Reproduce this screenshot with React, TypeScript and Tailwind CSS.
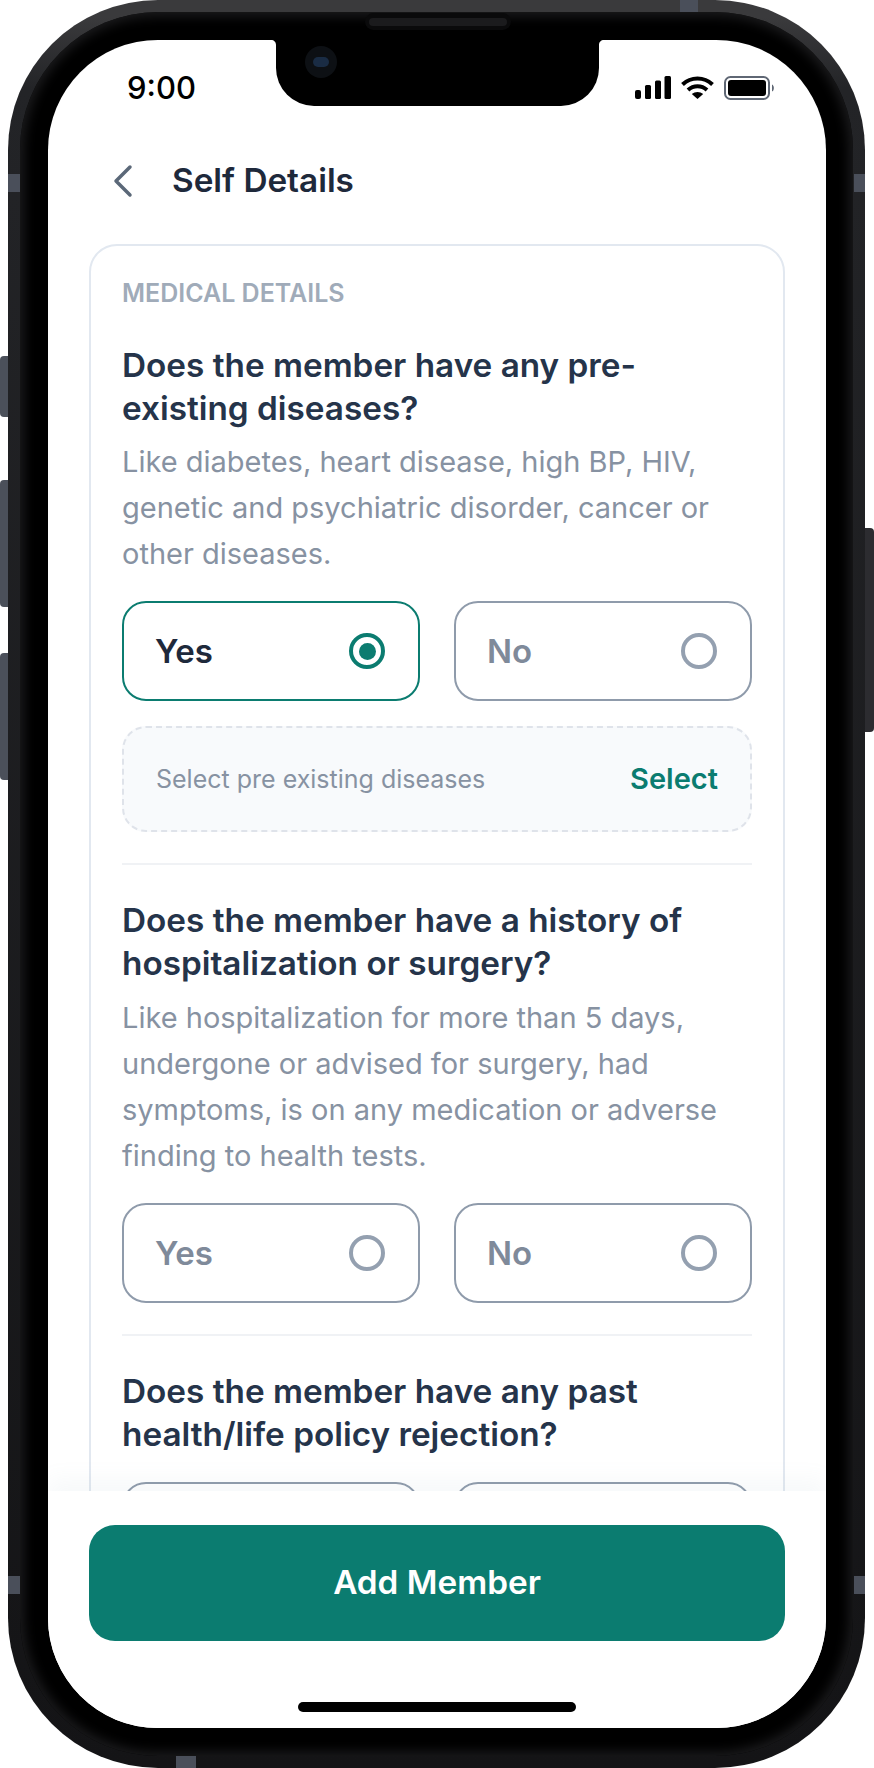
const questions = [
  {
    id: "pre-existing",
    title: ["Does the member have any pre-", "existing diseases?"],
    hint: [
      "Like diabetes, heart disease, high BP, HIV,",
      "genetic and psychiatric disorder, cancer or",
      "other diseases.",
    ],
    answer: "Yes",
  },
  {
    id: "hospitalization",
    title: ["Does the member have a history of", "hospitalization or surgery?"],
    hint: [
      "Like hospitalization for more than 5 days,",
      "undergone or advised for surgery, had",
      "symptoms, is on any medication or adverse",
      "finding to health tests.",
    ],
    answer: null,
  },
  {
    id: "rejection",
    title: ["Does the member have any past", "health/life policy rejection?"],
    hint: [],
    answer: null,
  },
];

const RadioCard = ({ label, active }: { label: string; active: boolean }) => (
  <div
    className={`flex h-[100px] flex-1 items-center justify-between rounded-[24px] border-2 pl-[31px] pr-[33px] ${
      active ? "border-[#0b7c70]" : "border-[#8f9bab]"
    }`}
  >
    <span
      className={`pt-[2px] text-[33px] font-semibold ${
        active ? "text-[#1e293b]" : "text-[#7f8a9a]"
      }`}
    >
      {label}
    </span>
    {active ? (
      <span className="flex size-[36px] items-center justify-center rounded-full border-[4px] border-[#0b7c70]">
        <span className="size-[17px] rounded-full bg-[#0b7c70]" />
      </span>
    ) : (
      <span className="size-[36px] rounded-full border-[4px] border-[#94a0b0]" />
    )}
  </div>
);

const StatusIcons = () => (
  <div className="flex items-center gap-[10px]">
    <svg width="36" height="24" viewBox="0 0 36 24" fill="#000">
      <rect x="0" y="14" width="6" height="9" rx="2" />
      <rect x="10" y="9" width="6" height="14" rx="1.5" />
      <rect x="20" y="4.5" width="6" height="18.5" rx="1.5" />
      <rect x="29.5" y="0" width="6.5" height="23" rx="1.5" />
    </svg>
    <svg width="33" height="24" viewBox="0 0 33 24" fill="none" stroke="#000" strokeWidth="4">
      <path d="M1.5 8.5 C10 0.5 23 0.5 31.5 8.5" />
      <path d="M7 14 C12.5 9 20.5 9 26 14" />
      <path d="M16.5 23 L10.8 18 C14 15.3 19 15.3 22.2 18 Z" fill="#000" stroke="none" />
    </svg>
    <svg width="52" height="24" viewBox="0 0 52 24" fill="none">
      <rect x="1" y="1" width="44" height="22" rx="5.5" stroke="#5f6774" strokeWidth="2" />
      <rect x="4" y="4" width="38" height="16" rx="3" fill="#000" />
      <path d="M48 8.5 C50.5 9.5 50.5 14.5 48 15.5 Z" fill="#5f6774" />
    </svg>
  </div>
);

export default function App() {
  return (
    <div className="relative h-[1768px] w-[874px] bg-white font-['Inter',sans-serif]">
      {/* side buttons */}
      <div className="absolute left-0 top-[356px] h-[61px] w-[9px] rounded-l-[4px] bg-[#4b505a]" />
      <div className="absolute left-0 top-[480px] h-[127px] w-[9px] rounded-l-[4px] bg-[#4b505a]" />
      <div className="absolute left-0 top-[653px] h-[127px] w-[9px] rounded-l-[4px] bg-[#4b505a]" />
      <div className="absolute right-0 top-[528px] h-[204px] w-[10px] rounded-r-[4px] bg-[#2c2c30]" />

      <div className="relative ml-[8px] h-[1768px] w-[857px] rounded-[150px] bg-gradient-to-b from-[#3a3a3c] from-[1%] via-[#232427] via-[5%] to-[#141416] p-[12px]">
        {/* antenna bands */}
        <div className="absolute left-[672px] top-0 h-[12px] w-[18px] bg-[#4a4f5a]" />
        <div className="absolute left-0 top-[174px] h-[18px] w-[12px] bg-[#4a4f5a]" />
        <div className="absolute right-0 top-[174px] h-[18px] w-[11px] bg-[#4a4f5a]" />
        <div className="absolute left-0 top-[1576px] h-[18px] w-[12px] bg-[#4a4f5a]" />
        <div className="absolute right-0 top-[1576px] h-[18px] w-[11px] bg-[#4a4f5a]" />
        <div className="absolute bottom-0 left-[168px] h-[12px] w-[20px] bg-[#4a4f5a]" />

        <div className="h-full w-full rounded-[138px] bg-black pb-[28px] pl-[28px] pr-[27px] pt-[28px] shadow-[inset_0_0_12px_4px_#1c1c1e]">
          {/* speaker */}
          <div className="absolute left-[357px] top-[13px] z-30 flex h-[17px] w-[146px] items-center rounded-full bg-[#0a0a0b] px-[4px]">
            <div className="h-[8px] w-full rounded-full bg-[#1b1b1d]" />
          </div>
          <div className="relative flex h-full w-full flex-col overflow-hidden rounded-[110px] bg-white">
            {/* notch */}
            <div className="absolute left-[228px] top-0 z-20 h-[66px] w-[323px] rounded-b-[38px] bg-black">
              <svg className="absolute -left-[5px] top-0" width="5" height="5" viewBox="0 0 5 5" fill="#000">
                <path d="M0 0 H5 V5 C5 2 3 0 0 0 Z" />
              </svg>
              <svg className="absolute -right-[5px] top-0" width="5" height="5" viewBox="0 0 5 5" fill="#000">
                <path d="M5 0 H0 V5 C0 2 2 0 5 0 Z" />
              </svg>
              <div className="absolute left-[29px] top-[6px] size-[32px] rounded-full bg-[#0d1014]">
                <div className="absolute left-[8px] top-[11px] h-[10px] w-[16px] rounded-full bg-[#1a2c44]" />
              </div>
            </div>

            <div className="flex h-[66px] shrink-0 items-end justify-between pb-0 pl-[79px] pr-[50px]">
              <span className="text-[31px] font-medium leading-[36px] text-black">9:00</span>
              <div className="pb-[6px]">
                <StatusIcons />
              </div>
            </div>

            <div className="mt-[37px] flex h-[76px] shrink-0 items-center gap-[38px] pl-[64px]">
              <svg width="22" height="34" viewBox="0 0 22 34" fill="none" stroke="#5b6878" strokeWidth="3.5" strokeLinecap="round" strokeLinejoin="round">
                <path d="M18 3 L4 17 L18 31" />
              </svg>
              <h1 className="text-[33.3px] font-semibold leading-none text-[#1e293b]">Self Details</h1>
            </div>

            <div className="min-h-0 flex-1 overflow-hidden px-[41px] pt-[25px]">
              <div className="rounded-[28px] border-2 border-[#e2e8f0] px-[31px] pb-[40px] pt-[29px]">
                <p className="text-[25px] font-semibold leading-[36px] text-[#a0abb9]">MEDICAL DETAILS</p>
                {questions.map((question, index) => (
                  <div key={question.id}>
                    <h2 className={`text-[33.3px] font-semibold leading-[43px] text-[#25344a] ${index === 0 ? "mt-[33px]" : "mt-[34px]"}`}>
                      {question.title.map((line) => (
                        <div key={line}>{line}</div>
                      ))}
                    </h2>
                    {question.hint.length > 0 && (
                      <div className={`text-[29px] leading-[46px] text-[#8792a2] ${index === 0 ? "mt-[9px]" : "mt-[10px]"}`}>
                        {question.hint.map((line) => (
                          <div key={line}>{line}</div>
                        ))}
                      </div>
                    )}
                    <div className={`flex gap-[34px] ${question.hint.length > 0 ? "mt-[24px]" : "mt-[26px]"}`}>
                      <RadioCard label="Yes" active={question.answer === "Yes"} />
                      <RadioCard label="No" active={question.answer === "No"} />
                    </div>
                    {question.answer === "Yes" && (
                      <div className="mt-[25px] flex h-[106px] items-center justify-between rounded-[24px] border-2 border-dashed border-[#dfe3ea] bg-[#f8fafc] pl-[32px] pr-[32px]">
                        <span className="pt-[2px] text-[25px] text-[#8792a2]">Select pre existing diseases</span>
                        <span className="text-[29px] font-semibold text-[#0b7c70]">Select</span>
                      </div>
                    )}
                    {index < questions.length - 1 && (
                      <div className="mt-[31px] h-[2px] bg-[#f0f2f5]" />
                    )}
                  </div>
                ))}
              </div>
            </div>

            <div className="relative z-10 flex h-[237px] shrink-0 flex-col items-center bg-white px-[41px] pt-[34px] shadow-[0_-12px_20px_rgba(148,163,184,0.07)]">
              <button className="h-[116px] w-full rounded-[26px] bg-[#0b7c70] text-[33.3px] font-semibold text-white">
                Add Member
              </button>
              <div className="mt-[61px] h-[10px] w-[278px] rounded-full bg-black" />
            </div>
          </div>
        </div>
      </div>
    </div>
  );
}
